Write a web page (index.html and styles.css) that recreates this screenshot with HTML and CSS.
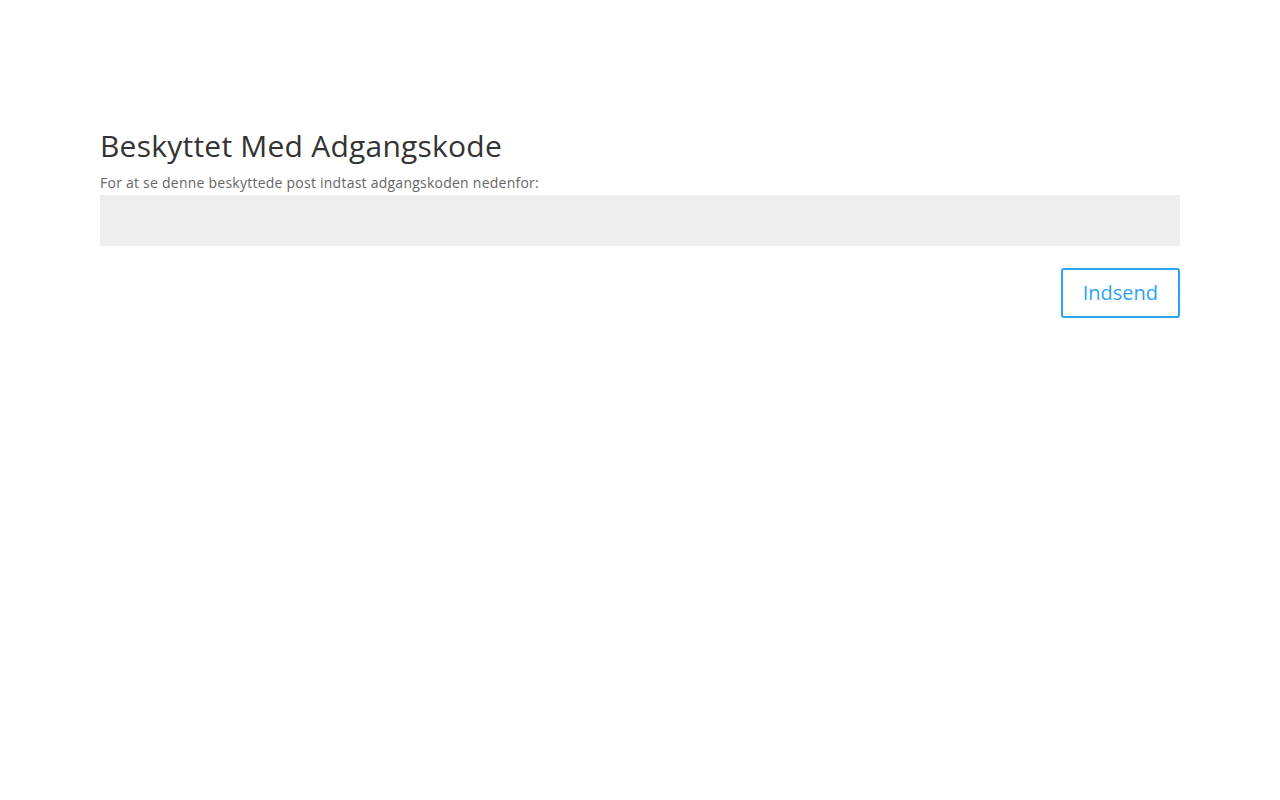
FILE: index.html
```html
<!DOCTYPE html>
<html lang="da">
<head>
<meta charset="utf-8">
<title>Beskyttet Med Adgangskode</title>
<link rel="stylesheet" href="styles.css">
</head>
<body>
<div class="container">
  <form class="pw-form">
    <h1 class="title">Beskyttet Med Adgangskode</h1>
    <p class="label">For at se denne beskyttede post indtast adgangskoden nedenfor:</p>
    <input class="field" type="password" aria-label="Adgangskode">
    <div class="actions">
      <button class="submit" type="button">Indsend</button>
    </div>
  </form>
</div>
</body>
</html>
```

FILE: styles.css
```css
html, body {
  margin: 0;
  padding: 0;
  background: #fff;
}
body {
  font-family: "Open Sans", "Liberation Sans", Arial, sans-serif;
  color: #666;
}
.container {
  width: 1080px;
  margin: 0 auto;
  padding-top: 131px;
}
.pw-form {
  display: flex;
  flex-direction: column;
}
.title {
  margin: 0;
  padding-bottom: 10px;
  font-size: 30px;
  font-weight: 500;
  line-height: 30px;
  letter-spacing: 0.23px;
  color: #333;
}
.label {
  margin: 0;
  font-size: 14px;
  line-height: 24px;
  letter-spacing: 0.24px;
  color: #666;
}
.field {
  box-sizing: border-box;
  width: 100%;
  height: 51px;
  border: none;
  margin: 0;
  padding: 16px;
  background: #eee;
  font-family: inherit;
  font-size: 14px;
  color: #999;
  outline: none;
}
.actions {
  display: flex;
  justify-content: flex-end;
  margin-top: 22px;
}
.submit {
  box-sizing: border-box;
  height: 50px;
  padding: 0 20px;
  border: 2px solid #2ea3f2;
  border-radius: 3px;
  background: transparent;
  font-family: inherit;
  font-size: 20px;
  font-weight: 500;
  line-height: 34px;
  color: #2ea3f2;
  cursor: pointer;
}
```
